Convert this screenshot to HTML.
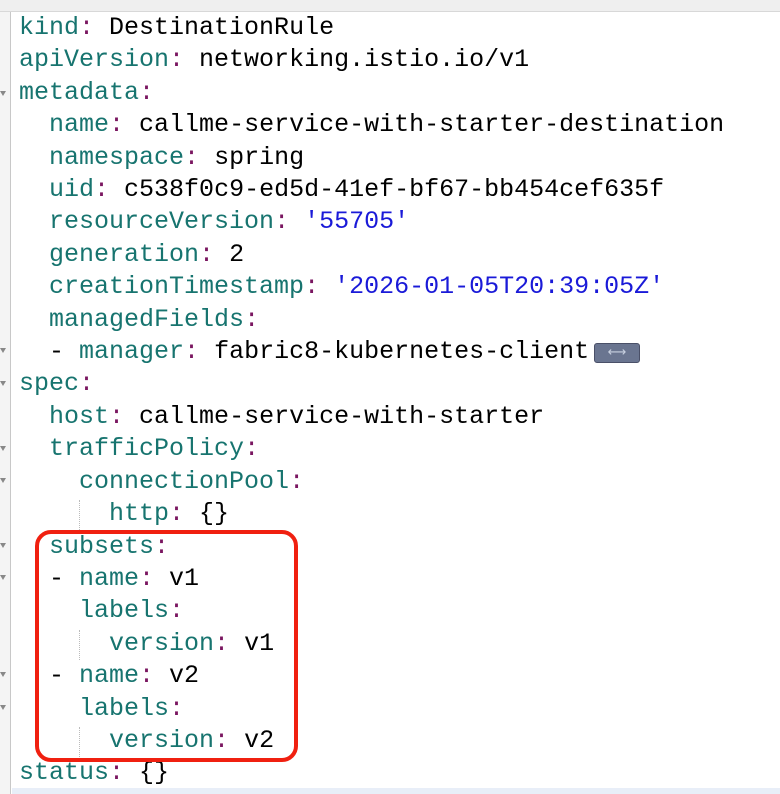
<!DOCTYPE html>
<html><head><meta charset="utf-8"><style>
html,body{margin:0;padding:0;background:#fff;width:780px;height:794px;overflow:hidden;position:relative}
.top{position:absolute;left:0;top:0;width:780px;height:11px;background:#efefef;border-bottom:1px solid #d8d8d8}
.gut{position:absolute;left:0;top:12px;width:10px;height:782px;background:#f4f4f4;border-right:1px solid #c8c8c8}
.code{position:absolute;left:19px;top:12px;font-family:"Liberation Mono",monospace;font-size:25px;line-height:32.4px;white-space:pre;color:#000}
.k{color:#17746f}.c{color:#7a1660}.s{color:#1a1ad8}
.box{position:absolute;left:35px;top:530px;width:255px;height:224px;border:4px solid #f02010;border-radius:16px}
.fold{position:absolute;left:0;width:0;height:0;border-left:3px solid transparent;border-right:3px solid transparent;border-top:5px solid #888}
.ell{position:absolute;left:594px;top:343px;width:44px;height:18px;background:#6a7590;border:1px solid #4a5068;border-radius:3px;color:#c8d0e0;font-family:"DejaVu Sans",sans-serif;font-size:13px;line-height:18px;text-align:center}
.guide{position:absolute;border-left:1px dotted #bbb}
.bot{position:absolute;left:12px;top:788px;width:768px;height:6px;background:#e8eef8}
</style></head><body>
<div class="top"></div><div class="gut"></div>
<div class="fold" style="top:91px"></div>
<div class="fold" style="top:348px"></div>
<div class="fold" style="top:381px"></div>
<div class="fold" style="top:446px"></div>
<div class="fold" style="top:478px"></div>
<div class="fold" style="top:543px"></div>
<div class="fold" style="top:575px"></div>
<div class="fold" style="top:672px"></div>
<div class="fold" style="top:705px"></div>
<div class="guide" style="left:79px;top:500px;height:30px"></div>
<div class="guide" style="left:79px;top:630px;height:30px"></div>
<div class="guide" style="left:79px;top:727px;height:30px"></div>
<div class="code"><span class="k">kind</span><span class="c">:</span> DestinationRule
<span class="k">apiVersion</span><span class="c">:</span> networking.istio.io/v1
<span class="k">metadata</span><span class="c">:</span>
  <span class="k">name</span><span class="c">:</span> callme-service-with-starter-destination
  <span class="k">namespace</span><span class="c">:</span> spring
  <span class="k">uid</span><span class="c">:</span> c538f0c9-ed5d-41ef-bf67-bb454cef635f
  <span class="k">resourceVersion</span><span class="c">:</span> <span class="s">'55705'</span>
  <span class="k">generation</span><span class="c">:</span> 2
  <span class="k">creationTimestamp</span><span class="c">:</span> <span class="s">'2026-01-05T20:39:05Z'</span>
  <span class="k">managedFields</span><span class="c">:</span>
  - <span class="k">manager</span><span class="c">:</span> fabric8-kubernetes-client
<span class="k">spec</span><span class="c">:</span>
  <span class="k">host</span><span class="c">:</span> callme-service-with-starter
  <span class="k">trafficPolicy</span><span class="c">:</span>
    <span class="k">connectionPool</span><span class="c">:</span>
      <span class="k">http</span><span class="c">:</span> {}
  <span class="k">subsets</span><span class="c">:</span>
  - <span class="k">name</span><span class="c">:</span> v1
    <span class="k">labels</span><span class="c">:</span>
      <span class="k">version</span><span class="c">:</span> v1
  - <span class="k">name</span><span class="c">:</span> v2
    <span class="k">labels</span><span class="c">:</span>
      <span class="k">version</span><span class="c">:</span> v2
<span class="k">status</span><span class="c">:</span> {}</div>
<div class="ell">⟷</div>
<div class="box"></div>
<div class="bot"></div>
</body></html>
